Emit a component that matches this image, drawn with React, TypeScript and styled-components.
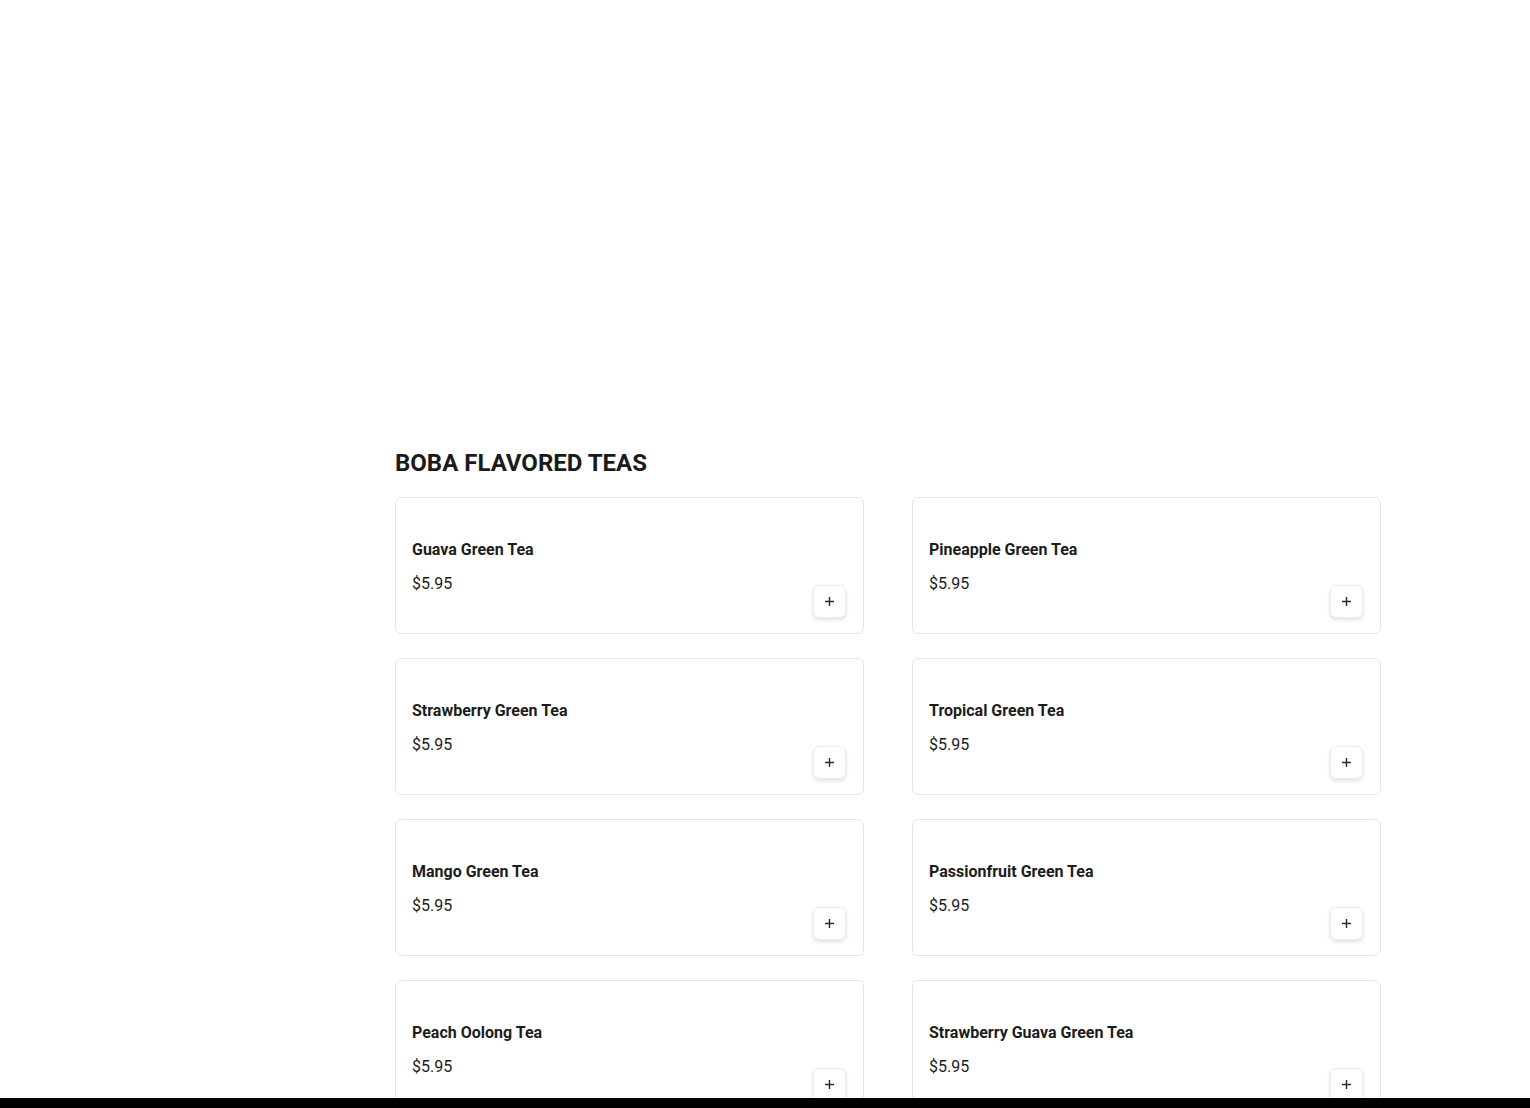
import React from "react";
import styled, { createGlobalStyle } from "styled-components";

const GlobalStyle = createGlobalStyle`
  html, body {
    margin: 0;
    padding: 0;
    background: #ffffff;
    font-family: Roboto, "Noto Sans", "Liberation Sans", sans-serif;
    color: #1c1c1c;
  }
`;

const Page = styled.div`
  display: grid;
  grid-template-columns: 395px 986px 1fr;
  min-height: 1108px;
`;

const Hero = styled.div`
  grid-column: 1 / -1;
  height: 448px;
`;

const Section = styled.section`
  grid-column: 2;
`;

const Heading = styled.h2`
  margin: 0 0 19px;
  font-size: 24px;
  line-height: 30px;
  font-weight: 700;
  color: #1a1a1a;
`;

const Grid = styled.div`
  display: grid;
  grid-template-columns: 1fr 1fr;
  column-gap: 48px;
  row-gap: 24px;
`;

const Card = styled.div`
  box-sizing: border-box;
  height: 137px;
  border: 1px solid #e6e6e6;
  border-radius: 6px;
  padding: 16px;
  display: flex;
  justify-content: space-between;
  align-items: flex-end;
  background: #fff;
`;

const Info = styled.div`
  align-self: flex-start;
  padding-top: 26px;
  display: flex;
  flex-direction: column;
  gap: 14px;
`;

const Name = styled.div`
  font-size: 16px;
  line-height: 20px;
  font-weight: 700;
  color: #1c1c1c;
`;

const Price = styled.div`
  font-size: 16px;
  line-height: 20px;
  font-weight: 400;
  color: #1c1c1c;
`;

const AddButton = styled.button`
  box-sizing: border-box;
  width: 33px;
  height: 33px;
  margin-right: 1px;
  margin-bottom: -1px;
  border: 1px solid #ececec;
  border-radius: 6px;
  background: #fff;
  box-shadow: 0 2px 4px rgba(0, 0, 0, 0.12);
  display: flex;
  align-items: center;
  justify-content: center;
  padding: 0;
  cursor: pointer;
`;

const BottomBar = styled.div`
  position: fixed;
  left: 0;
  right: 0;
  bottom: 0;
  height: 10px;
  background: #000;
`;

const teas = [
  "Guava Green Tea",
  "Pineapple Green Tea",
  "Strawberry Green Tea",
  "Tropical Green Tea",
  "Mango Green Tea",
  "Passionfruit Green Tea",
  "Peach Oolong Tea",
  "Strawberry Guava Green Tea",
];

function PlusIcon() {
  return (
    <svg width="11" height="11" viewBox="0 0 11 11" fill="none">
      <path d="M5.5 1v9M1 5.5h9" stroke="#2a2a2a" strokeWidth="1.4" />
    </svg>
  );
}

export default function App() {
  return (
    <>
      <GlobalStyle />
      <Page>
        <Hero />
        <Section>
          <Heading>BOBA FLAVORED TEAS</Heading>
          <Grid>
            {teas.map((t) => (
              <Card key={t}>
                <Info>
                  <Name>{t}</Name>
                  <Price>$5.95</Price>
                </Info>
                <AddButton aria-label={`Add ${t}`}>
                  <PlusIcon />
                </AddButton>
              </Card>
            ))}
          </Grid>
        </Section>
      </Page>
      <BottomBar />
    </>
  );
}
